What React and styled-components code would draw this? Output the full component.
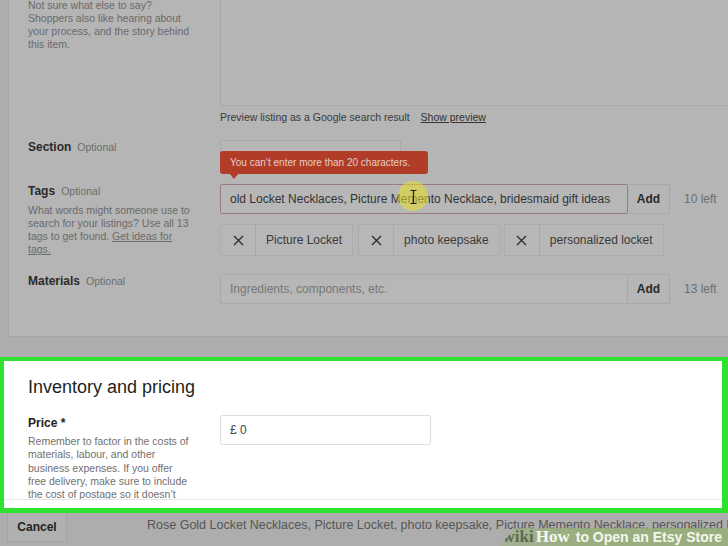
import React from "react";
import styled, { createGlobalStyle } from "styled-components";

const GlobalStyle = createGlobalStyle`
  html, body {
    margin: 0;
    padding: 0;
    background: #adadad;
    overflow: hidden;
  }
  body {
    font-family: "Liberation Sans", Arial, sans-serif;
  }
`;

const Page = styled.div`
  position: relative;
  width: 728px;
  height: 546px;
  overflow: hidden;
  display: flex;
  flex-direction: column;
`;

const DimCard = styled.div`
  margin-left: 8px;
  height: 337px;
  flex-shrink: 0;
  box-sizing: border-box;
  background: #b5b5b5;
  border-left: 1px solid #a8a8a8;
  border-bottom: 1px solid #a6a6a6;
  padding-left: 19px;
  overflow: hidden;
`;

const Row = styled.div`
  display: grid;
  grid-template-columns: 192px 1fr;
  align-items: start;
  margin-top: ${(p) => p.$top || 0}px;
`;

const Label = styled.div`
  font-size: 12px;
  font-weight: bold;
  color: ${(p) => (p.$light ? "#222" : "#2b2b2b")};
  line-height: 14px;
  padding-top: ${(p) => p.$pad || 0}px;
  span {
    font-weight: normal;
    font-size: 10.5px;
    color: ${(p) => (p.$light ? "#777" : "#6c6c6c")};
    margin-left: 6px;
  }
`;

const Help = styled.p`
  margin: ${(p) => p.$top || 0}px 0 0;
  font-size: 10.5px;
  line-height: ${(p) => p.$lh || 13}px;
  color: ${(p) => (p.$light ? "#707070" : "#6a6a6a")};
  width: 163px;
  a {
    color: inherit;
    text-decoration: underline;
  }
`;

const TextArea = styled.div`
  height: 106px;
  margin-top: -1px;
  border-left: 1px solid #a9a9a9;
  border-bottom: 1px solid #a9a9a9;
  background: #b5b5b5;
`;

const Preview = styled.div`
  margin-top: 5px;
  font-size: 10.5px;
  color: #3a3a3a;
  line-height: 13px;
  a {
    margin-left: 8px;
    text-decoration: underline;
    color: #333;
  }
`;

const Field = styled.div`
  position: relative;
  display: flex;
  align-items: center;
`;

const Input = styled.div`
  box-sizing: border-box;
  width: ${(p) => p.$w}px;
  height: ${(p) => p.$h || 30}px;
  border: 1px solid ${(p) => p.$border || "#a8a8a8"};
  background: ${(p) => p.$bg || "#b7b7b7"};
  border-radius: 2px;
  display: flex;
  align-items: center;
  padding-left: 9px;
  font-size: 12px;
  color: ${(p) => p.$color || "#333"};
  white-space: pre;
  overflow: hidden;
`;

const AddButton = styled.div`
  box-sizing: border-box;
  width: 42px;
  height: 30px;
  border: 1px solid #a8a8a8;
  border-left: none;
  background: #b6b6b6;
  font-size: 12px;
  font-weight: bold;
  color: #2a2a2a;
  display: flex;
  align-items: center;
  justify-content: center;
`;

const Left = styled.div`
  margin-left: 14px;
  font-size: 12px;
  color: #6e6e6e;
`;

const Tooltip = styled.div`
  position: absolute;
  left: 0;
  top: 11px;
  width: 208px;
  height: 23px;
  box-sizing: border-box;
  background: #b13c27;
  border-radius: 3px;
  color: #e6cdc6;
  font-size: 10px;
  line-height: 23px;
  padding-left: 10px;
  &::after {
    content: "";
    position: absolute;
    left: 10px;
    bottom: -5px;
    border-left: 4px solid transparent;
    border-right: 4px solid transparent;
    border-top: 5px solid #b13c27;
  }
`;

const Highlight = styled.div`
  position: absolute;
  left: 178px;
  top: -3px;
  width: 30px;
  height: 30px;
  border-radius: 50%;
  background: rgba(232, 226, 40, 0.55);
  pointer-events: none;
`;

const Cursor = styled.svg`
  position: absolute;
  left: 190px;
  top: 6px;
`;

const Chips = styled.div`
  display: flex;
  margin-top: 10px;
`;

const Chip = styled.div`
  display: flex;
  height: 32px;
  box-sizing: border-box;
  border: 1px solid #acacac;
  background: #b7b7b7;
  margin-left: ${(p) => p.$gap || 0}px;
`;

const ChipX = styled.div`
  width: 34px;
  border-right: 1px solid #a9a9a9;
  display: flex;
  align-items: center;
  justify-content: center;
`;

const ChipText = styled.div`
  padding: 0 10px;
  display: flex;
  align-items: center;
  font-size: 12px;
  color: #3a3a3a;
`;

const Gap = styled.div`
  height: 20px;
  flex-shrink: 0;
`;

const Highlighted = styled.section`
  height: 156px;
  flex-shrink: 0;
  box-sizing: border-box;
  border: 4px solid #2fe22f;
  border-right-width: 6px;
  border-bottom-width: 5px;
  background: #fff;
  overflow: hidden;
`;

const Inner = styled.div`
  height: 139px;
  box-sizing: border-box;
  border-bottom: 1px solid #e6e6e6;
  margin-left: 1px;
  padding-left: 23px;
  overflow: hidden;
`;

const Heading = styled.h2`
  margin: 15px 0 0;
  font-size: 18px;
  font-weight: normal;
  color: #1f1f1f;
  line-height: 22px;
  font-family: "Liberation Sans", Arial, sans-serif;
`;

const BottomBar = styled.div`
  flex: 1;
  display: flex;
  align-items: flex-start;
  background: #adadad;
  overflow: hidden;
`;

const Cancel = styled.div`
  flex-shrink: 0;
  margin-left: 7px;
  width: 60px;
  height: 29px;
  box-sizing: border-box;
  border: 1px solid #a2a2a2;
  border-top: none;
  background: #b0b0b0;
  font-size: 12px;
  font-weight: bold;
  color: #222;
  display: flex;
  align-items: center;
  justify-content: center;
`;

const Summary = styled.div`
  margin-left: 80px;
  margin-top: 5px;
  font-size: 12.5px;
  color: #565656;
  white-space: nowrap;
`;

const Watermark = styled.div`
  position: absolute;
  right: 0;
  bottom: 0;
  width: 228px;
  height: 18px;
  background: linear-gradient(90deg, rgba(160, 180, 135, 0.55), rgba(150, 175, 120, 0.85) 30%);
  clip-path: polygon(14px 0, 100% 0, 100% 100%, 0 100%);
  display: flex;
  align-items: center;
  justify-content: flex-end;
  padding-right: 6px;
  box-sizing: border-box;
  font-size: 14px;
  font-weight: bold;
  color: #f4f7ee;
  white-space: nowrap;
`;

const Wiki = styled.span`
  font-family: "Liberation Serif", "Times New Roman", serif;
  color: #5d6a50;
  font-size: 17px;
`;

const How = styled.span`
  font-family: "Liberation Serif", "Times New Roman", serif;
  font-size: 17px;
  margin-left: 2px;
  margin-right: 6px;
`;

const XIcon = () => (
  <svg width="11" height="11" viewBox="0 0 11 11">
    <path d="M1 1 L10 10 M10 1 L1 10" stroke="#2e2e2e" strokeWidth="1.4" fill="none" />
  </svg>
);

const tags = [
  { text: "Picture Locket", gap: 0 },
  { text: "photo keepsake", gap: 5 },
  { text: "personalized locket", gap: 4 },
];

export default function App() {
  return (
    <>
      <GlobalStyle />
      <Page>
        <DimCard>
          <Row>
            <Help $top={-1}>
              Not sure what else to say? Shoppers also like hearing about your process, and the story behind this item.
            </Help>
            <div>
              <TextArea />
              <Preview>
                Preview listing as a Google search result <a>Show preview</a>
              </Preview>
            </div>
          </Row>

          <Row $top={16}>
            <Label>
              Section<span>Optional</span>
            </Label>
            <Field>
              <Input $w={181} $h={26} />
              <Tooltip>You can’t enter more than 20 characters.</Tooltip>
            </Field>
          </Row>

          <Row $top={18}>
            <div>
              <Label>
                Tags<span>Optional</span>
              </Label>
              <Help $top={6}>
                What words might someone use to search for your listings? Use all 13 tags to get found.{" "}
                <a>Get ideas for tags.</a>
              </Help>
            </div>
            <div>
              <Field>
                <Input $w={408} $border="#9c7b7b">
                  old Locket Necklaces, Picture Memento Necklace, bridesmaid gift ideas
                </Input>
                <AddButton>Add</AddButton>
                <Left>10 left</Left>
                <Highlight />
                <Cursor width="7" height="14" viewBox="0 0 7 14">
                  <path d="M0.5 0.5 H6.5 M3.5 0.5 V13.5 M0.5 13.5 H6.5" stroke="#1e1e1e" strokeWidth="1.2" fill="none" />
                </Cursor>
              </Field>
              <Chips>
                {tags.map((t) => (
                  <Chip key={t.text} $gap={t.gap}>
                    <ChipX>
                      <XIcon />
                    </ChipX>
                    <ChipText>{t.text}</ChipText>
                  </Chip>
                ))}
              </Chips>
            </div>
          </Row>

          <Row $top={18}>
            <Label>
              Materials<span>Optional</span>
            </Label>
            <Field>
              <Input $w={408} $color="#767676">
                Ingredients, components, etc.
              </Input>
              <AddButton>Add</AddButton>
              <Left>13 left</Left>
            </Field>
          </Row>
        </DimCard>

        <Gap />

        <Highlighted>
          <Inner>
            <Heading>Inventory and pricing</Heading>
            <Row $top={17}>
              <div>
                <Label $light $pad={1}>
                  Price *
                </Label>
                <Help $light $top={5} $lh={13.3}>
                  Remember to factor in the costs of materials, labour, and other business expenses. If you offer free
                  delivery, make sure to include the cost of postage so it doesn’t eat into your profits.
                </Help>
              </div>
              <Input $w={211} $h={30} $border="#dedede" $bg="#fff" $color="#444">
                {"£ 0"}
              </Input>
            </Row>
          </Inner>
        </Highlighted>

        <BottomBar>
          <Cancel>Cancel</Cancel>
          <Summary>
            Rose Gold Locket Necklaces, Picture Locket, photo keepsake, Picture Memento Necklace, personalized locket
          </Summary>
        </BottomBar>

        <Watermark>
          <Wiki>wiki</Wiki>
          <How>How</How>
          to Open an Etsy Store
        </Watermark>
      </Page>
    </>
  );
}
